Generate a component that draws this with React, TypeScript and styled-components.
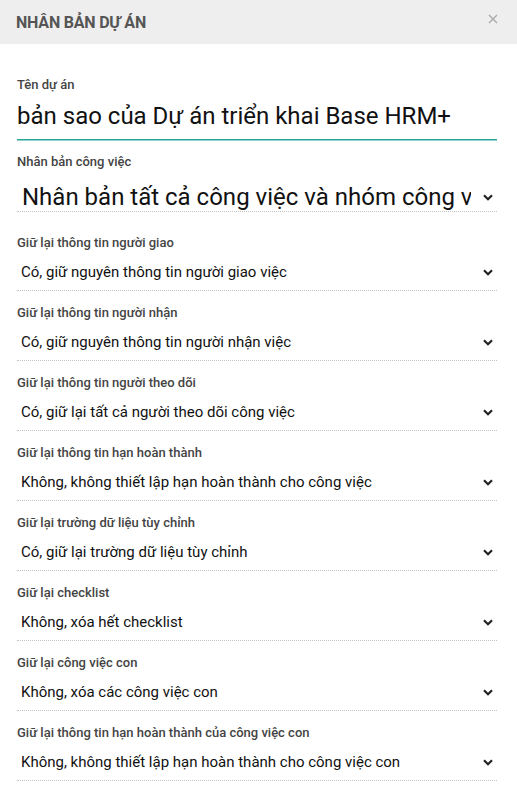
import React from "react";
import styled, { createGlobalStyle } from "styled-components";

const Global = createGlobalStyle`
  html, body { margin: 0; padding: 0; background: #fff; }
  body { font-family: Roboto, "Noto Sans", Arial, sans-serif; color: #222; }
`;

const Modal = styled.div`
  width: 517px;
  min-height: 785px;
  background: #fff;
  display: flex;
  flex-direction: column;
`;

const Header = styled.div`
  height: 44px;
  background: #eeeeee;
  display: flex;
  align-items: center;
  justify-content: space-between;
  padding: 0 19px 0 16px;
  box-sizing: border-box;
`;

const Title = styled.h4`
  margin: 0;
  font-size: 16px;
  font-weight: 700;
  color: #555;
  letter-spacing: -0.2px;
`;

const Close = styled.button`
  border: 0;
  background: transparent;
  padding: 0;
  width: 10px;
  height: 10px;
  display: flex;
  align-items: center;
  justify-content: center;
  cursor: pointer;
  margin-top: -7px;
`;

const Body = styled.div`
  padding: 33px 20px 0 17px;
  display: flex;
  flex-direction: column;
`;

const Field = styled.div<{ $gap?: number }>`
  display: flex;
  flex-direction: column;
  margin-bottom: ${(p) => p.$gap ?? 14}px;
`;

const Label = styled.label`
  font-size: 13px;
  font-weight: 500;
  color: #444;
  line-height: 15px;
`;

const TextInput = styled.div`
  font-size: 24px;
  line-height: 30px;
  color: #111;
  padding: 9px 0 8px;
  border-bottom: 1px solid #26a69a;
  box-shadow: 0 1px 0 0 rgba(38, 166, 154, 0.5);
  white-space: nowrap;
`;

const SelectBox = styled.div<{ $big?: boolean }>`
  display: flex;
  align-items: center;
  gap: ${(p) => (p.$big ? "12px" : "10px")};
  border-bottom: 1px dotted #c4c4c4;
  padding: ${(p) => (p.$big ? "14px 4px 0 5px" : "13px 4px 9px 4px")};
  color: #111;
  font-size: ${(p) => (p.$big ? "24px" : "15px")};
  line-height: ${(p) => (p.$big ? "28px" : "18px")};
`;

const Value = styled.span`
  white-space: nowrap;
  overflow: hidden;
  flex: 1;
`;

const Chevron = () => (
  <svg width="10" height="7" viewBox="0 0 10 7" aria-hidden>
    <path d="M1 1.2 L5 5.2 L9 1.2" stroke="#222" strokeWidth="2.2" fill="none" />
  </svg>
);

const rows: [string, string][] = [
  ["Giữ lại thông tin người giao", "Có, giữ nguyên thông tin người giao việc"],
  ["Giữ lại thông tin người nhận", "Có, giữ nguyên thông tin người nhận việc"],
  ["Giữ lại thông tin người theo dõi", "Có, giữ lại tất cả người theo dõi công việc"],
  ["Giữ lại thông tin hạn hoàn thành", "Không, không thiết lập hạn hoàn thành cho công việc"],
  ["Giữ lại trường dữ liệu tùy chỉnh", "Có, giữ lại trường dữ liệu tùy chỉnh"],
  ["Giữ lại checklist", "Không, xóa hết checklist"],
  ["Giữ lại công việc con", "Không, xóa các công việc con"],
  ["Giữ lại thông tin hạn hoàn thành của công việc con", "Không, không thiết lập hạn hoàn thành cho công việc con"],
];

export default function App() {
  return (
    <Modal>
      <Global />
      <Header>
        <Title>NHÂN BẢN DỰ ÁN</Title>
        <Close aria-label="close">
          <svg width="10" height="10" viewBox="0 0 10 10">
            <path d="M1 1 L9 9 M9 1 L1 9" stroke="#aaa" strokeWidth="1.4" />
          </svg>
        </Close>
      </Header>
      <Body>
        <Field $gap={14}>
          <Label>Tên dự án</Label>
          <TextInput>bản sao của Dự án triển khai Base HRM+</TextInput>
        </Field>
        <Field $gap={23}>
          <Label>Nhân bản công việc</Label>
          <SelectBox $big>
            <Value>Nhân bản tất cả công việc và nhóm công việc</Value>
            <Chevron />
          </SelectBox>
        </Field>
        {rows.map(([l, v]) => (
          <Field key={l}>
            <Label>{l}</Label>
            <SelectBox>
              <Value>{v}</Value>
              <Chevron />
            </SelectBox>
          </Field>
        ))}
      </Body>
    </Modal>
  );
}
